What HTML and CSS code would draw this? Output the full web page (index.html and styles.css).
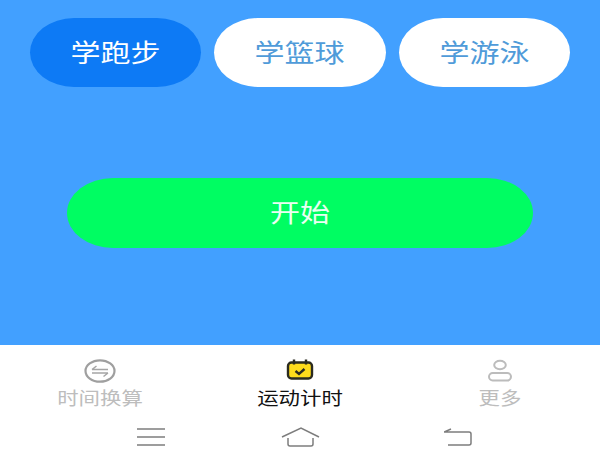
FILE: index.html
```html
<!DOCTYPE html>
<html lang="zh-CN">

<head>
    <meta charset="UTF-8">
    <meta name="viewport" content="width=device-width, initial-scale=1.0">
    <title>运动计时</title>
    <link rel="stylesheet" href="styles.css">
</head>

<body>
    <div class="screen">
        <div class="main">
            <div class="sports">
                <div class="sport active"><span>学跑步</span></div>
                <div class="sport"><span>学篮球</span></div>
                <div class="sport"><span>学游泳</span></div>
            </div>
            <div class="start"><span>开始</span></div>
        </div>
        <div class="tabs">
            <div class="tab">
                <svg class="tab-icon" width="34" height="24" viewBox="0 0 34 24">
                    <ellipse cx="17" cy="12" rx="14.5" ry="10.7" fill="none" stroke="#9f9f9f" stroke-width="2.2" />
                    <path d="M9 10.500H25M9 10.500L13.500 7M9 14H25M25 14L20.500 17.500" fill="none" stroke="#a5a5a5" stroke-width="1.500" />
                </svg>
                <span class="tab-label">时间换算</span>
            </div>
            <div class="tab current">
                <svg class="tab-icon" width="34" height="24" viewBox="0 0 34 24">
                    <rect x="5" y="3.500" width="24" height="16" rx="3.500" fill="#ffdc1c" stroke="#2b2b20" stroke-width="2.400" />
                    <path d="M11 0.500V5.500M23 0.500V5.500" fill="none" stroke="#2b2b20" stroke-width="2.400" />
                    <path d="M12.500 12L16 15L21.500 10" fill="none" stroke="#2b2b20" stroke-width="2.400" />
                </svg>
                <span class="tab-label">运动计时</span>
            </div>
            <div class="tab">
                <svg class="tab-icon" width="34" height="24" viewBox="0 0 34 24">
                    <ellipse cx="17" cy="6" rx="5.800" ry="4.300" fill="none" stroke="#bcbcbc" stroke-width="2" />
                    <rect x="6" y="14" width="22" height="7.500" rx="3.700" fill="none" stroke="#bcbcbc" stroke-width="2" />
                </svg>
                <span class="tab-label">更多</span>
            </div>
        </div>
        <div class="nav">
            <svg width="28" height="20" viewBox="0 0 28 20">
                <path d="M0 2H28M0 10H28M0 18H28" fill="none" stroke="#7d7d7d" stroke-width="1.500" />
            </svg>
            <svg width="39" height="20" viewBox="0 0 39 20">
                <path d="M1 10L20 1L38 10M7 11V17Q7 19 9 19H30Q32 19 32 17V11" fill="none" stroke="#7d7d7d" stroke-width="1.500" />
            </svg>
            <svg width="28" height="20" viewBox="0 0 28 20">
                <path d="M0 5H25Q27 5 27 7V16Q27 18 25 18H4M0 5L7 2" fill="none" stroke="#7d7d7d" stroke-width="1.500" />
            </svg>
        </div>
    </div>
</body>

</html>
```

FILE: styles.css
```css
body {
    margin: 0;
    font-family: "Noto Sans CJK SC", "Liberation Sans", sans-serif;
}

span {
    display: inline-block;
}

.screen {
    width: 600px;
    height: 450px;
    overflow: hidden;
    display: flex;
    flex-direction: column;
    background-color: white;
}

.main {
    height: 345px;
    box-sizing: border-box;
    padding-top: 18px;
    background-color: #42a0ff;
}

.sports {
    display: flex;
    gap: 13px;
    padding: 0 30px;
}

.sport {
    flex: 1;
    height: 69px;
    box-sizing: border-box;
    padding-bottom: 4px;
    display: flex;
    align-items: center;
    justify-content: center;
    border-radius: 44px / 34.5px;
    background-color: white;
    color: #4f9bd9;
    font-size: 25px;
}

.sport span {
    transform: scaleX(1.2);
}

.sport.active {
    background-color: #0d7af5;
    color: white;
}

.start {
    height: 70px;
    box-sizing: border-box;
    padding-bottom: 4px;
    margin: 91px 67px 0;
    display: flex;
    align-items: center;
    justify-content: center;
    border-radius: 46px / 35px;
    background-color: #00fd62;
    color: #eafff2;
    font-size: 25px;
}

.start span {
    transform: scaleX(1.2);
}

.tabs {
    display: grid;
    grid-template-columns: 1fr 1fr 1fr;
    padding-top: 14px;
}

.tab {
    display: flex;
    flex-direction: column;
    align-items: center;
    color: #bdbdbd;
    font-size: 18px;
    line-height: 28px;
}

.tab-icon {
    display: block;
}

.tab-label {
    transform: scaleX(1.19);
}

.tab.current {
    color: #111;
}

.nav {
    display: grid;
    grid-template-columns: 144px 163px 28px;
    padding: 16px 0 0 137px;
}

.nav svg {
    display: block;
}
```
